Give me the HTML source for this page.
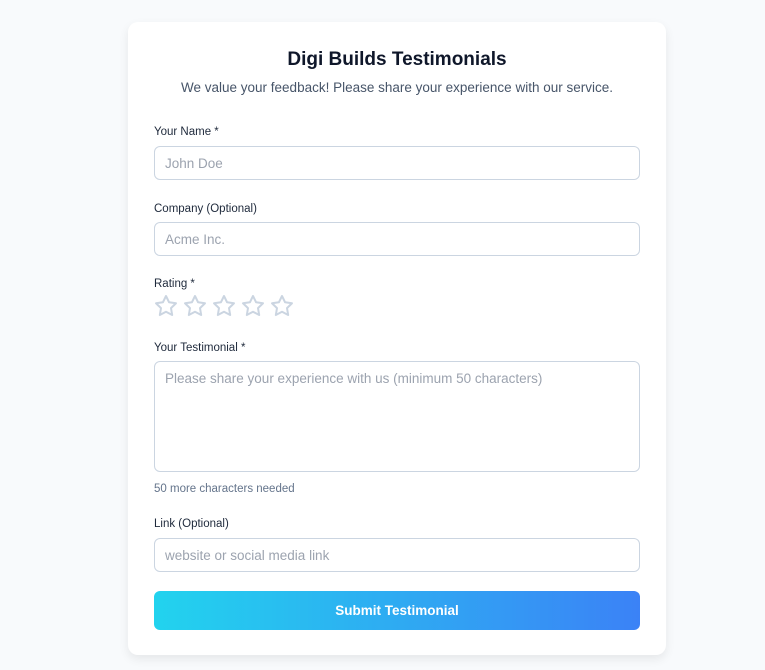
<!DOCTYPE html>
<html><head><style>
*{box-sizing:border-box;margin:0;padding:0}
body{width:765px;height:670px;background:#f8fafc;font-family:"Liberation Sans",sans-serif;position:relative;overflow:hidden}
.card{position:absolute;left:128px;top:22px;width:538px;height:633px;background:#fff;border-radius:10px;box-shadow:0 4px 10px rgba(0,0,0,0.08)}
.a{position:absolute;white-space:nowrap}
h1{font-size:19px;font-weight:bold;color:#0f172a;left:0;width:538px;text-align:center;top:27px}
.sub{font-size:13.5px;color:#475569;left:0;width:538px;text-align:center;top:58px}
.lbl{font-size:11.5px;color:#1e293b;left:26px}
.in{position:absolute;left:26px;width:486px;height:34px;border:1px solid #cbd5e1;border-radius:6px;font-size:13.5px;color:#9ca3af;padding:9px 10px 8px}
.help{font-size:11.5px;color:#64748b;left:26px;top:461px}
.btn{position:absolute;left:26px;top:569px;width:486px;height:39px;border-radius:6px;background:linear-gradient(90deg,#22d3ee,#3b82f6);color:#fff;font-weight:bold;font-size:13.5px;text-align:center;line-height:39px}
.stars{position:absolute;left:26px;top:272px;display:flex;gap:5px}
</style></head><body>
<div class="card">
<h1 class="a">Digi Builds Testimonials</h1>
<div class="a sub">We value your feedback! Please share your experience with our service.</div>
<div class="a lbl" style="top:104px">Your Name *</div>
<div class="in" style="top:124px">John Doe</div>
<div class="a lbl" style="top:181px">Company (Optional)</div>
<div class="in" style="top:200px">Acme Inc.</div>
<div class="a lbl" style="top:256px">Rating *</div>
<div class="stars">
<svg width="24" height="24" viewBox="0 0 24 24"><path d="M12 2l3.09 6.26L22 9.27l-5 4.87 1.18 6.88L12 17.77l-6.18 3.25L7 14.14 2 9.27l6.91-1.01z" fill="none" stroke="#cbd5e1" stroke-width="2" stroke-linejoin="round"/></svg>
<svg width="24" height="24" viewBox="0 0 24 24"><path d="M12 2l3.09 6.26L22 9.27l-5 4.87 1.18 6.88L12 17.77l-6.18 3.25L7 14.14 2 9.27l6.91-1.01z" fill="none" stroke="#cbd5e1" stroke-width="2" stroke-linejoin="round"/></svg>
<svg width="24" height="24" viewBox="0 0 24 24"><path d="M12 2l3.09 6.26L22 9.27l-5 4.87 1.18 6.88L12 17.77l-6.18 3.25L7 14.14 2 9.27l6.91-1.01z" fill="none" stroke="#cbd5e1" stroke-width="2" stroke-linejoin="round"/></svg>
<svg width="24" height="24" viewBox="0 0 24 24"><path d="M12 2l3.09 6.26L22 9.27l-5 4.87 1.18 6.88L12 17.77l-6.18 3.25L7 14.14 2 9.27l6.91-1.01z" fill="none" stroke="#cbd5e1" stroke-width="2" stroke-linejoin="round"/></svg>
<svg width="24" height="24" viewBox="0 0 24 24"><path d="M12 2l3.09 6.26L22 9.27l-5 4.87 1.18 6.88L12 17.77l-6.18 3.25L7 14.14 2 9.27l6.91-1.01z" fill="none" stroke="#cbd5e1" stroke-width="2" stroke-linejoin="round"/></svg>
</div>
<div class="a lbl" style="top:320px">Your Testimonial *</div>
<div class="in" style="top:339px;height:111px">Please share your experience with us (minimum 50 characters)</div>
<div class="a help">50 more characters needed</div>
<div class="a lbl" style="top:496px">Link (Optional)</div>
<div class="in" style="top:516px">website or social media link</div>
<div class="btn">Submit Testimonial</div>
</div>
</body></html>
